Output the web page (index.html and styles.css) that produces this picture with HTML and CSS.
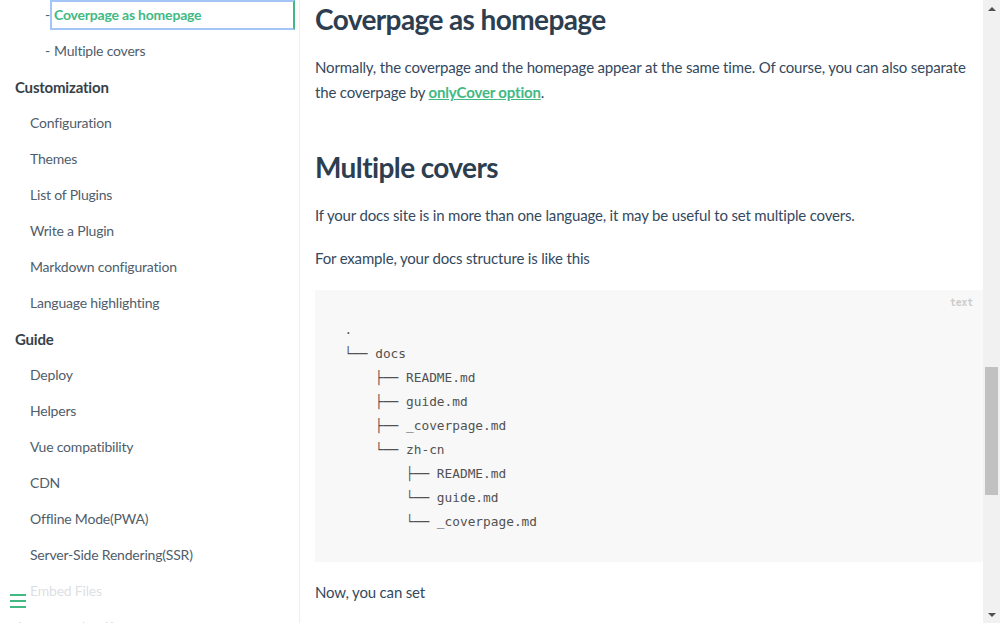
FILE: index.html
```html
<!DOCTYPE html>
<html lang="en">
<head>
<meta charset="utf-8">
<title>Cover page - docsify</title>
<link rel="stylesheet" href="styles.css">
</head>
<body>
<div class="app">
  <aside class="sidebar">
    <ul class="nav">
      <li class="row lvl3 active"><span class="dash">-</span><a class="link" href="#coverpage-as-homepage">Coverpage as homepage</a></li>
      <li class="row lvl3"><span class="dash">-</span><a class="link" href="#multiple-covers">Multiple covers</a></li>
      <li class="row head">Customization</li>
      <li class="row lvl2"><a class="link" href="#">Configuration</a></li>
      <li class="row lvl2"><a class="link" href="#">Themes</a></li>
      <li class="row lvl2"><a class="link" href="#">List of Plugins</a></li>
      <li class="row lvl2"><a class="link" href="#">Write a Plugin</a></li>
      <li class="row lvl2"><a class="link" href="#">Markdown configuration</a></li>
      <li class="row lvl2"><a class="link" href="#">Language highlighting</a></li>
      <li class="row head">Guide</li>
      <li class="row lvl2"><a class="link" href="#">Deploy</a></li>
      <li class="row lvl2"><a class="link" href="#">Helpers</a></li>
      <li class="row lvl2"><a class="link" href="#">Vue compatibility</a></li>
      <li class="row lvl2"><a class="link" href="#">CDN</a></li>
      <li class="row lvl2"><a class="link" href="#">Offline Mode(PWA)</a></li>
      <li class="row lvl2"><a class="link" href="#">Server-Side Rendering(SSR)</a></li>
      <li class="row lvl2"><a class="link" href="#">Embed Files</a></li>
      <li class="row lvl1"><a class="link" href="#">Awesome docsify</a></li>
    </ul>
    <button class="toggle" aria-label="Toggle sidebar"><span></span><span></span><span></span></button>
  </aside>
  <main class="main">
    <article class="content">
      <h2 class="first">Coverpage as homepage</h2>
      <p>Normally, the coverpage and the homepage appear at the same time. Of course, you can also separate the coverpage by <a class="ilink" href="#">onlyCover option</a>.</p>
      <h2>Multiple covers</h2>
      <p>If your docs site is in more than one language, it may be useful to set multiple covers.</p>
      <p>For example, your docs structure is like this</p>
      <pre data-lang="text"><code>.
└── docs
    ├── README.md
    ├── guide.md
    ├── _coverpage.md
    └── zh-cn
        ├── README.md
        └── guide.md
        └── _coverpage.md</code></pre>
      <p>Now, you can set</p>
    </article>
  </main>
  <div class="scrollbar">
    <div class="sb-btn"><svg width="8" height="4" viewBox="0 0 8 4"><path d="M0 4 L4 0 L8 4 Z" fill="#505050"/></svg></div>
    <div class="sb-track"><div class="sb-thumb"></div></div>
    <div class="sb-btn"><svg width="8" height="4" viewBox="0 0 8 4"><path d="M0 0 L8 0 L4 4 Z" fill="#505050"/></svg></div>
  </div>
</div>
</body>
</html>
```

FILE: styles.css
```css
* { box-sizing: border-box; }
html, body { margin: 0; padding: 0; }
body {
  font-family: "Source Sans Pro", Lato, "Helvetica Neue", Arial, sans-serif;
  font-size: 15px;
  color: #34495e;
  background: #fff;
  overflow: hidden;
  -webkit-font-smoothing: antialiased;
}
.app { display: flex; height: 623px; }

/* sidebar */
.sidebar {
  position: relative;
  width: 300px;
  flex: none;
  border-right: 1px solid #eee;
  overflow: hidden;
}
.nav {
  list-style: none;
  margin: 0;
  padding: 0 4px 0 0;
  display: flex;
  flex-direction: column;
  gap: 6px;
}
.row { height: 30px; line-height: 30px; display: flex; white-space: nowrap; letter-spacing: -0.2px; }
.head { padding-left: 15px; font-weight: 700; color: #364149; }
.lvl1 { padding-left: 15px; font-size: 14px; }
.lvl2 { padding-left: 30px; font-size: 14px; }
.lvl3 { padding-left: 45px; font-size: 14px; }
.link { color: #505d6b; text-decoration: none; }
.dash { display: inline-block; width: 5px; color: #505d6b; }
.lvl3 .link { padding-left: 4px; }
.active .link {
  flex: 1;
  color: #42b983;
  font-weight: 700;
  border: 2px solid #a3c5f7;
  border-right-color: #42b983;
  padding-left: 2px;
  line-height: 26px;
}
.toggle {
  position: absolute;
  left: 0;
  bottom: 0;
  width: 284px;
  height: 45px;
  padding: 16px 10px 0;
  border: 0;
  background: rgba(255, 255, 255, 0.8);
  display: flex;
  flex-direction: column;
  gap: 4px;
  cursor: pointer;
}
.toggle span { display: block; width: 16px; height: 2px; background: #42b983; }

/* main */
.main { flex: 1; min-width: 0; overflow: hidden; }
.content { padding: 3px 0 0 15px; letter-spacing: -0.17px; }
h2 {
  font-size: 28px;
  font-weight: 700;
  color: #2c3e50;
  line-height: 33.6px;
  margin: 45px 0 12.8px;
  letter-spacing: -0.6px;
}
h2.first { margin-top: 0; }
p { margin: 17px 0; line-height: 25.6px; }
h2.first + p { margin-top: 18px; }
h2 + p { margin-top: 19px; }
.ilink { color: #42b983; font-weight: 700; text-decoration: underline; }
pre {
  position: relative;
  margin: 18px 0;
  padding: 0 22.4px;
  background: #f8f8f8;
  font-family: "DejaVu Sans Mono", "Liberation Mono", monospace;
  letter-spacing: 0;
}
pre code {
  display: block;
  padding: 28.16px 5px 28.16px 7px;
  font-family: inherit;
  font-size: 12.8px;
  line-height: 24px;
  color: #525252;
  white-space: pre;
}
pre::after {
  content: attr(data-lang);
  position: absolute;
  top: 0;
  right: 0;
  padding: 5px 10px 0;
  font-size: 9.6px;
  font-weight: 600;
  line-height: 15px;
  color: #ccc;
}

/* scrollbar */
.scrollbar {
  width: 17px;
  flex: none;
  background: #f1f1f1;
  display: flex;
  flex-direction: column;
}
.sb-btn { height: 17px; display: flex; align-items: center; justify-content: center; }
.sb-track { flex: 1; padding: 350px 2px 0; }
.sb-thumb { height: 128px; background: #c1c1c1; }
```
